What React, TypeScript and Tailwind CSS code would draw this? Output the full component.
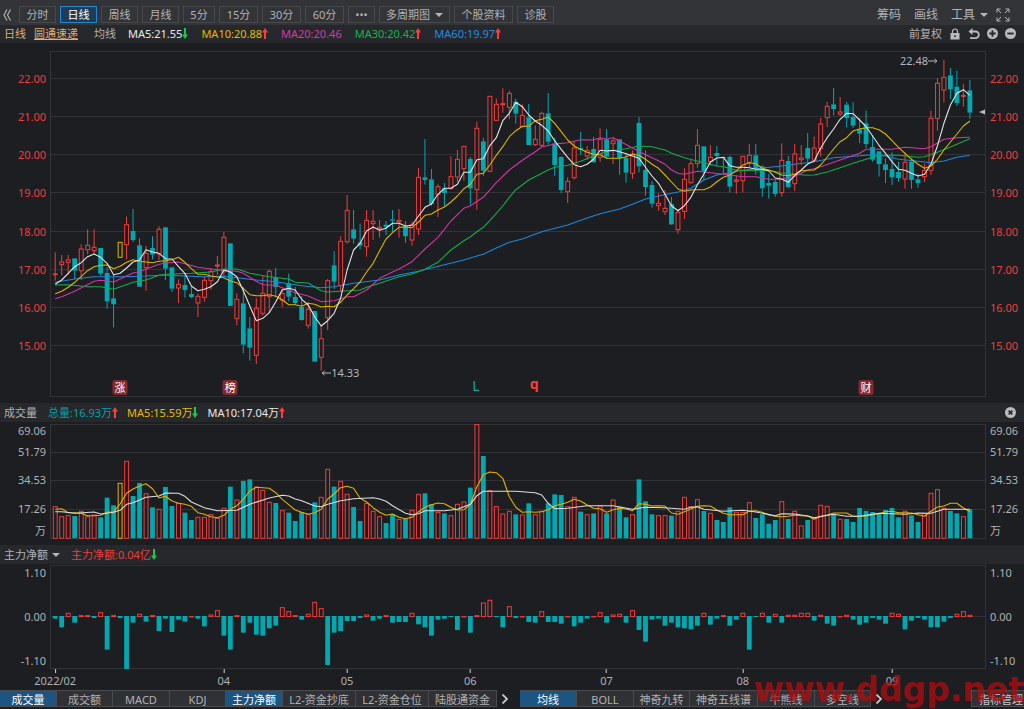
import React from "react";

type Kind = "r" | "g" | "y";
type Candle = [Kind, number, number, number, number];
type Point = [number, number];

const UP = "#f23c3c";
const DOWN = "#00a8b0";
const MARKED = "#e0b800";
const BG = "#1d1e21";
const GRID = "#323337";
const W = 936;
const colorOf = { r: UP, g: DOWN, y: MARKED };

const xAt = (i: number) => 5.2 + i * 6.487;

/* kind, high, body top, body bottom, low; vertical unit is a third of a pixel */
const candles: Candle[] = [
  ["r", 607, 672, 674, 692], ["r", 615, 636, 644, 676], ["r", 615, 630, 637, 675], ["g", 625, 625, 662, 687], ["r", 583, 597, 662, 690],
  ["r", 538, 586, 599, 613], ["r", 538, 592, 602, 613], ["g", 594, 594, 671, 677], ["g", 651, 669, 754, 776], ["g", 672, 745, 763, 832],
  ["y", 577, 577, 622, 622], ["r", 500, 524, 584, 628], ["g", 477, 543, 570, 576], ["g", 565, 586, 710, 710], ["r", 588, 610, 653, 722],
  ["g", 559, 594, 614, 627], ["r", 529, 538, 612, 630], ["g", 532, 532, 656, 690], ["g", 652, 652, 716, 726], ["r", 688, 703, 714, 759],
  ["g", 671, 705, 720, 743], ["g", 710, 732, 741, 745], ["r", 731, 739, 759, 801], ["r", 680, 691, 742, 755], ["r", 655, 664, 692, 719],
  ["r", 618, 645, 648, 675], ["r", 546, 562, 665, 680], ["g", 580, 580, 768, 768], ["r", 730, 748, 806, 826], ["g", 712, 760, 884, 910],
  ["g", 801, 835, 893, 932], ["r", 744, 775, 916, 942], ["r", 677, 730, 790, 797], ["r", 658, 664, 740, 788], ["g", 654, 684, 711, 740],
  ["r", 715, 731, 751, 770], ["g", 671, 700, 740, 754], ["g", 711, 741, 759, 765], ["g", 738, 771, 810, 812], ["r", 755, 778, 826, 836],
  ["g", 783, 783, 935, 935], ["r", 828, 866, 922, 962], ["r", 687, 692, 803, 840], ["g", 604, 646, 695, 717], ["r", 559, 574, 706, 724],
  ["r", 435, 481, 575, 581], ["g", 480, 538, 566, 581], ["g", 521, 577, 587, 598], ["r", 480, 511, 590, 620], ["r", 480, 514, 521, 570],
  ["r", 510, 532, 536, 563], ["g", 513, 524, 531, 555], ["g", 480, 508, 512, 546], ["r", 477, 511, 515, 563], ["g", 513, 529, 559, 578],
  ["r", 515, 524, 570, 587], ["r", 354, 382, 537, 555], ["g", 267, 382, 390, 404], ["g", 357, 388, 462, 467], ["r", 403, 410, 433, 501],
  ["g", 399, 414, 429, 469], ["r", 319, 380, 416, 418], ["r", 300, 328, 381, 395], ["r", 289, 289, 356, 392], ["g", 321, 327, 415, 464],
  ["r", 215, 235, 419, 479], ["g", 263, 274, 362, 378], ["r", 139, 139, 364, 364], ["r", 146, 163, 211, 211], ["r", 115, 161, 164, 188],
  ["r", 122, 130, 172, 208], ["g", 146, 155, 191, 221], ["r", 163, 196, 229, 233], ["g", 162, 202, 285, 285], ["r", 226, 268, 284, 288],
  ["r", 185, 190, 286, 290], ["g", 129, 190, 275, 284], ["g", 263, 280, 345, 377], ["g", 319, 321, 420, 429], ["r", 382, 394, 425, 459],
  ["r", 275, 294, 383, 389], ["g", 246, 294, 300, 314], ["r", 288, 302, 318, 330], ["g", 260, 297, 337, 339], ["r", 235, 268, 322, 335],
  ["g", 237, 268, 320, 327], ["r", 266, 273, 281, 342], ["g", 268, 268, 325, 374], ["g", 308, 324, 368, 398], ["r", 301, 312, 370, 386],
  ["g", 201, 219, 349, 367], ["g", 301, 360, 411, 437], ["g", 393, 405, 461, 473], ["r", 430, 460, 467, 482], ["r", 420, 475, 485, 495],
  ["g", 441, 462, 523, 525], ["r", 477, 487, 539, 551], ["r", 355, 388, 484, 507], ["r", 327, 341, 398, 401], ["r", 237, 286, 340, 353],
  ["g", 289, 289, 363, 391], ["r", 285, 322, 335, 347], ["g", 288, 309, 318, 348], ["g", 320, 321, 325, 370], ["g", 316, 321, 410, 427],
  ["r", 377, 390, 394, 431], ["r", 319, 319, 392, 427], ["r", 282, 316, 337, 352], ["g", 282, 316, 358, 374], ["g", 345, 349, 415, 440],
  ["g", 372, 399, 407, 446], ["g", 390, 396, 432, 440], ["r", 280, 331, 428, 440], ["g", 318, 333, 411, 415], ["r", 282, 312, 401, 423],
  ["r", 285, 324, 329, 345], ["g", 249, 294, 326, 337], ["r", 260, 294, 331, 334], ["r", 204, 222, 296, 320], ["r", 156, 169, 203, 231],
  ["g", 114, 163, 177, 196], ["r", 141, 186, 192, 198], ["g", 156, 164, 204, 232], ["g", 156, 201, 227, 234], ["g", 204, 238, 251, 279],
  ["g", 182, 220, 282, 294], ["g", 256, 291, 329, 335], ["g", 303, 304, 342, 380], ["g", 325, 343, 360, 399], ["g", 307, 357, 382, 405],
  ["g", 335, 366, 384, 395], ["r", 307, 337, 387, 416], ["g", 325, 335, 390, 416], ["g", 371, 388, 399, 413], ["r", 341, 361, 380, 396],
  ["r", 182, 205, 361, 375], ["r", 85, 100, 205, 242], ["r", 30, 82, 120, 157], ["g", 54, 76, 118, 147], ["g", 62, 110, 159, 167],
  ["r", 102, 136, 139, 170], ["g", 90, 121, 188, 207],
];

const series = (ys: number[]): Point[] => ys.map((y, i) => [i, y]);

const ma5 = series([
  703, 690, 670, 650, 638, 620, 612, 622, 640, 674, 670, 654, 636, 630, 599, 606, 610, 626, 627, 650, 670, 708, 722, 718, 710, 695, 660, 666, 680, 722,
  768, 812, 805, 788, 755, 720, 715, 720, 748, 765, 800, 828, 812, 790, 745, 660, 600, 580, 543, 531, 541, 535, 520, 520, 528, 526, 498, 472, 462, 433,
  415, 415, 403, 367, 367, 329, 326, 287, 263, 212, 190, 157, 170, 195, 213, 226, 243, 272, 298, 322, 344, 350, 343, 328, 301, 303, 301, 305, 311, 318,
  325, 352, 378, 400, 433, 467, 482, 467, 442, 404, 372, 336, 324, 322, 347, 352, 352, 353, 358, 358, 363, 384, 387, 397, 377, 360, 342, 333, 294, 263,
  237, 208, 190, 191, 210, 230, 258, 286, 310, 335, 358, 361, 370, 378, 373, 343, 288, 220, 165, 130, 119, 136,
]);

const ma10 = series([
  731, 724, 712, 697, 680, 662, 650, 646, 645, 656, 649, 637, 629, 634, 636, 638, 634, 632, 629, 622, 637, 656, 673, 673, 678, 681, 683, 693, 698, 715,
  734, 737, 737, 734, 739, 749, 764, 764, 769, 760, 763, 771, 769, 770, 757, 735, 716, 696, 666, 640, 602, 567, 548, 532, 531, 533, 516, 496, 492, 480,
  471, 456, 438, 416, 403, 373, 370, 345, 316, 290, 260, 242, 229, 229, 212, 208, 201, 220, 245, 270, 288, 298, 307, 313, 314, 325, 325, 325, 320, 313,
  316, 328, 343, 355, 375, 396, 417, 424, 420, 419, 419, 411, 395, 382, 375, 362, 345, 338, 341, 355, 360, 367, 375, 377, 373, 362, 361, 360, 345, 321,
  297, 275, 263, 243, 237, 233, 233, 239, 252, 272, 292, 310, 328, 343, 355, 348, 328, 300, 276, 252, 228, 213,
]);

const ma20: Point[] = [
  [0, 746], [1, 740], [3, 724], [6, 694], [7, 691], [9, 696], [12, 669], [13, 665], [16, 643], [17, 639], [19, 636], [22, 652], [25, 659], [28, 664], [29, 670],
  [31, 694], [32, 704], [34, 706], [37, 728], [39, 738], [41, 755], [43, 752], [45, 740], [46, 740], [48, 720], [50, 685], [52, 666], [53, 657], [55, 635],
  [57, 597], [59, 562], [61, 513], [63, 475], [64, 467], [66, 442], [68, 398], [70, 360], [72, 331], [74, 305], [75, 291], [77, 282], [79, 278], [81, 269],
  [83, 270], [84, 263], [85, 267], [86, 263], [87, 273], [89, 294], [91, 314], [93, 332], [94, 343], [95, 360], [96, 370], [97, 373], [99, 364], [101, 368],
  [104, 375], [106, 380], [108, 380], [110, 388], [112, 388], [114, 379], [116, 360], [117, 356], [118, 350], [120, 337], [122, 323], [124, 310], [125, 298],
  [129, 298], [131, 292], [134, 296], [135, 290], [136, 279], [137, 268], [139, 263], [141, 262],
];

const ma30: Point[] = [
  [0, 705], [2, 704], [5, 710], [7, 710], [9, 718], [12, 697], [14, 690], [16, 676], [17, 673], [21, 670], [24, 666], [26, 657], [28, 657], [30, 670], [33, 680],
  [36, 687], [37, 697], [39, 699], [41, 722], [42, 726], [47, 720], [48, 712], [50, 700], [53, 680], [55, 672], [57, 658], [59, 637], [61, 600], [63, 572],
  [64, 560], [65, 545], [66, 532], [67, 512], [69, 468], [70, 442], [71, 419], [73, 390], [76, 360], [77, 352], [79, 346], [81, 334], [83, 318], [85, 305],
  [88, 296], [90, 288], [92, 290], [94, 300], [95, 310], [97, 323], [100, 338], [102, 348], [103, 350], [105, 361], [108, 362], [110, 361], [112, 369],
  [114, 373], [116, 376], [117, 375], [119, 366], [121, 353], [123, 340], [125, 328], [127, 316], [130, 316], [133, 322], [134, 320], [136, 307], [138, 291], [141, 266],
];

const ma60: Point[] = [
  [0, 697], [3, 687], [6, 680], [10, 680], [14, 678], [17, 675], [20, 678], [23, 680], [26, 679], [28, 683], [31, 690], [34, 695], [38, 707], [41, 713], [43, 710],
  [46, 700], [50, 690], [53, 675], [56, 664], [60, 644], [63, 630], [65, 618], [66, 613], [68, 594], [70, 577], [72, 567], [75, 545], [79, 525], [82, 504],
  [84, 491], [87, 477], [89, 463], [91, 447], [93, 438], [96, 426], [98, 415], [100, 390], [102, 375], [104, 368], [106, 361], [109, 354], [112, 348],
  [114, 343], [117, 335], [120, 323], [123, 319], [126, 314], [128, 318], [130, 328], [133, 334], [135, 338], [137, 333], [139, 322], [141, 316],
];

const volumes = [
  320, 350, 347, 348, 334, 350, 345, 352, 293, 316, 250, 184, 288, 249, 281, 322, 328, 261, 318, 310, 338, 360, 352, 352, 344, 355, 325, 260, 300, 243,
  238, 261, 271, 307, 309, 332, 338, 363, 336, 343, 307, 292, 208, 260, 244, 283, 321, 363, 310, 334, 350, 369, 342, 358, 356, 331, 283, 280, 313, 337,
  340, 347, 313, 306, 263, 72, 168, 272, 320, 342, 334, 343, 345, 310, 344, 334, 310, 283, 285, 320, 292, 335, 344, 340, 318, 340, 300, 320, 352, 344,
  238, 304, 343, 347, 347, 347, 334, 292, 320, 299, 333, 340, 360, 366, 322, 337, 337, 308, 354, 343, 371, 360, 305, 357, 334, 378, 360, 355, 316, 319,
  343, 358, 357, 366, 324, 333, 336, 340, 330, 324, 352, 334, 346, 366, 341, 280, 269, 325, 333, 340, 350, 328,
];

/* volume bars whose direction differs from the candle above them */
const volumeKind: Record<number, Kind> = {
  34: "g", 29: "g", 30: "g", 32: "r", 33: "r", 36: "g", 37: "g", 38: "g", 60: "g", 74: "r",
  102: "g", 104: "g", 105: "r", 106: "r", 107: "r", 117: "r", 118: "r", 119: "r", 121: "r",
};

const volMa5 = series([
  328, 326, 338, 338, 340, 347, 347, 346, 337, 335, 312, 280, 267, 258, 251, 266, 294, 289, 303, 310, 313, 319, 338, 343, 350, 353, 346, 328, 317, 298,
  273, 262, 263, 265, 278, 298, 314, 330, 337, 343, 338, 328, 297, 282, 263, 259, 265, 295, 306, 323, 337, 346, 342, 352, 356, 352, 335, 322, 314, 309,
  311, 322, 330, 329, 313, 260, 224, 216, 218, 235, 290, 322, 337, 335, 337, 335, 329, 317, 313, 307, 298, 303, 315, 325, 326, 337, 329, 325, 327, 332,
  311, 313, 318, 317, 318, 339, 343, 335, 327, 319, 317, 318, 330, 340, 344, 344, 344, 333, 332, 337, 345, 349, 350, 349, 345, 347, 348, 358, 349, 345,
  339, 339, 339, 349, 349, 348, 344, 341, 335, 334, 338, 338, 339, 344, 349, 334, 321, 318, 310, 310, 324, 335,
]);

const volMa10: Point[] = [
  [0, 335], [1, 335], [3, 340], [6, 336], [7, 342], [9, 337], [10, 331], [11, 313], [12, 308], [14, 292], [16, 288], [17, 279], [19, 280], [20, 289], [21, 306],
  [23, 323], [25, 332], [28, 331], [30, 313], [33, 294], [35, 286], [36, 288], [37, 297], [38, 302], [40, 318], [41, 320], [42, 313], [44, 302], [46, 296],
  [49, 293], [50, 297], [51, 304], [52, 317], [54, 340], [55, 344], [56, 341], [57, 332], [60, 332], [62, 328], [64, 313], [65, 287], [66, 274], [71, 274],
  [74, 278], [75, 285], [76, 310], [77, 326], [79, 325], [82, 317], [86, 317], [89, 328], [91, 322], [94, 323], [97, 328], [98, 322], [99, 320], [100, 328],
  [103, 334], [106, 331], [108, 336], [111, 347], [112, 341], [114, 342], [116, 348], [117, 353], [120, 343], [122, 349], [124, 349], [127, 340], [131, 343],
  [133, 339], [135, 340], [137, 328], [141, 328],
];

/* far end of each bar; zero sits at 214 and inflow lies above it */
const netFlow = [
  221, 247, 204, 233, 211, 211, 219, 202, 314, 211, 219, 372, 233, 207, 230, 211, 258, 221, 261, 224, 230, 214, 221, 244, 209, 196, 272, 314, 211, 263,
  233, 269, 272, 250, 242, 187, 199, 211, 224, 207, 171, 190, 360, 263, 258, 228, 228, 219, 209, 227, 221, 211, 233, 231, 231, 204, 238, 247, 272, 224,
  221, 216, 255, 214, 263, 211, 173, 165, 216, 247, 184, 219, 214, 231, 233, 199, 231, 231, 236, 214, 244, 233, 221, 214, 202, 233, 209, 207, 233, 196,
  255, 290, 224, 221, 242, 233, 247, 250, 253, 242, 204, 239, 221, 211, 242, 224, 204, 314, 216, 204, 233, 207, 233, 210, 210, 204, 204, 227, 210, 236,
  242, 214, 210, 224, 239, 233, 219, 224, 236, 204, 207, 253, 227, 219, 224, 247, 247, 230, 219, 207, 199, 210,
];

function Line({ points, color, base }: { points: Point[]; color: string; base: number }) {
  return (
    <polyline
      points={points.map(([i, y]) => `${xAt(i).toFixed(1)},${((y - base) / 3).toFixed(1)}`).join(" ")}
      fill="none"
      stroke={color}
      strokeWidth="1.1"
      strokeLinejoin="round"
    />
  );
}

function Bar({ i, top, bottom, kind }: { i: number; top: number; bottom: number; kind: Kind }) {
  const c = colorOf[kind];
  const x = xAt(i);
  if (kind === "g") return <rect x={x - 2.4} y={top} width="4.8" height={Math.max(bottom - top, 1)} fill={c} />;
  return <rect x={x - 1.9} y={top} width="3.9" height={Math.max(bottom - top, 0.3)} fill={BG} stroke={c} strokeWidth="1" />;
}

function Plot({ height, lines, label, children }: { height: number; lines: number[]; label: string; children: React.ReactNode }) {
  return (
    <svg role="img" aria-label={label} viewBox={`0 0 ${W} ${height}`} preserveAspectRatio="none" className="block h-full w-full overflow-hidden">
      <g shapeRendering="crispEdges" stroke={GRID} fill="none">
        <rect x="0.5" y="0.5" width={W - 1} height={height - 1} />
        {lines.map((y) => (
          <line key={y} x1="0" x2={W} y1={y + 0.5} y2={y + 0.5} />
        ))}
      </g>
      {children}
    </svg>
  );
}

function PriceChart() {
  return (
    <Plot height={346} lines={[27, 65, 103, 141, 180, 218, 256, 294]} label="日线">
      {candles.map(([k, h, t, b, l], i) => {
        const y = (v: number) => (v - 3) / 3;
        return (
          <g key={i}>
            {t > h && <line x1={xAt(i)} x2={xAt(i)} y1={y(h)} y2={y(t)} stroke={colorOf[k]} strokeWidth="1" />}
            {l > b && <line x1={xAt(i)} x2={xAt(i)} y1={y(b)} y2={y(l)} stroke={colorOf[k]} strokeWidth="1" />}
            <Bar i={i} top={y(t)} bottom={y(b)} kind={k} />
          </g>
        );
      })}
      <Line points={ma60} color="#1c86dc" base={3} />
      <Line points={ma30} color="#14ac48" base={3} />
      <Line points={ma20} color="#d334a4" base={3} />
      <Line points={ma10} color="#dcb400" base={3} />
      <Line points={ma5} color="#e4e4e4" base={3} />
      <path d="M935 58.5V63.5L929 61Z" fill="#b8b8b8" />
    </Plot>
  );
}

function VolumeChart() {
  return (
    <Plot height={115} lines={[28, 56, 85]} label="成交量">
      {volumes.map((v, i) => (
        <Bar key={i} i={i} top={Math.max((v - 72) / 3, 0.5)} bottom={114.3} kind={volumeKind[i] ?? candles[i][0]} />
      ))}
      <Line points={volMa5} color="#dcb400" base={72} />
      <Line points={volMa10} color="#dcdcdc" base={72} />
    </Plot>
  );
}

function FlowChart() {
  return (
    <Plot height={104} lines={[51]} label="主力净额">
      {netFlow.map((v, i) => {
        const y = (v - 60) / 3;
        return v > 214 ? <Bar key={i} i={i} top={51} bottom={y} kind="g" /> : <Bar key={i} i={i} top={y + 0.3} bottom={51.6} kind="r" />;
      })}
    </Plot>
  );
}

function Arrow({ up }: { up?: boolean }) {
  return (
    <svg viewBox="0 0 6 11" className="h-[11px] w-1.5 shrink-0" aria-hidden="true">
      <path d={up ? "M3 0L6 4.5H4V11H2V4.5H0Z" : "M3 11L6 6.5H4V0H2V6.5H0Z"} fill={up ? "#ff3b3b" : "#14cc4c"} />
    </svg>
  );
}

function Caret() {
  return (
    <svg viewBox="0 0 8 4" className="h-1 w-2 shrink-0" aria-hidden="true">
      <path d="M0 0H8L4 4Z" fill="#b4b6b8" />
    </svg>
  );
}

function Reading({ text, tone, dir }: { text: string; tone: string; dir?: "up" | "down" }) {
  return (
    <span className={`flex items-center whitespace-nowrap ${tone}`}>
      {text}
      {dir && <Arrow up={dir === "up"} />}
    </span>
  );
}

const periods = [
  { t: "分时", w: "w-[37px]" },
  { t: "日线", w: "w-[37px]", on: true },
  { t: "周线", w: "w-[37px]" },
  { t: "月线", w: "w-[37px]" },
  { t: "5分", w: "w-[32px]" },
  { t: "15分", w: "w-[39px]" },
  { t: "30分", w: "w-[39px]" },
  { t: "60分", w: "w-[39px]" },
  { t: "•••", w: "w-[27px]" },
  { t: "多周期图", w: "w-[71px]", caret: true },
  { t: "个股资料", w: "w-[59px]" },
  { t: "诊股", w: "w-[37px]" },
];

function Toolbar() {
  return (
    <header className="flex h-[25px] items-center bg-[#333438] pt-1 text-[#b0b2b4]">
      <button type="button" aria-label="返回" className="mr-2 ml-[3px] flex h-[17px] w-2 items-center">
        <svg viewBox="0 0 8 12" className="h-3 w-2" fill="none" stroke="#b4b6b8" strokeWidth="1.1">
          <path d="M4 0.5L1 6L4 11.5M7.5 0.5L4.5 6L7.5 11.5" />
        </svg>
      </button>
      <nav className="flex gap-1">
        {periods.map((p) => (
          <button
            key={p.t}
            type="button"
            className={`flex h-[17px] shrink-0 items-center justify-center gap-[5px] border whitespace-nowrap ${p.w} ${
              p.on ? "border-[#1e88d8] bg-[#1f3c54] text-white" : "border-[#48494d]"
            }`}
          >
            {p.t}
            {p.caret && <Caret />}
          </button>
        ))}
      </nav>
      <div className="mr-[14px] ml-auto flex items-center text-xs leading-none">
        <button type="button" className="mr-[13px]">筹码</button>
        <button type="button" className="mr-[13px]">画线</button>
        <button type="button" className="mr-2 flex items-center gap-[5px]">
          工具
          <Caret />
        </button>
        <button type="button" aria-label="全屏">
          <svg viewBox="0 0 14 14" className="size-3.5" fill="none" stroke="#b4b6b8" strokeWidth="1">
            <path d="M1 4.5V1H4.5M1 1L5 5M9.5 1H13V4.5M13 1L9 5M1 9.5V13H4.5M1 13L5 9M9.5 13H13V9.5M13 13L9 9" />
          </svg>
        </button>
      </div>
    </header>
  );
}

function InfoRow() {
  return (
    <div className="flex h-[18px] items-center bg-[#27282b] pb-px pl-1">
      <span className="text-[#dcae7c]">日线</span>
      <a href="#stock" className="ml-2 text-[#dcae7c] underline underline-offset-1">圆通速递</a>
      <span className="ml-4 text-[#b0b2b4]">均线</span>
      <div className="ml-3 flex gap-[13px]">
        <Reading text="MA5:21.55" tone="text-[#e8e8e8]" dir="down" />
        <Reading text="MA10:20.88" tone="text-[#e4bc00]" dir="up" />
        <Reading text="MA20:20.46" tone="text-[#d838a8]" />
        <Reading text="MA30:20.42" tone="text-[#14b44c]" dir="up" />
        <Reading text="MA60:19.97" tone="text-[#1e8ce4]" dir="up" />
      </div>
      <div className="mr-2 ml-auto flex items-center text-[#b0b2b4]">
        <span className="mr-2">前复权</span>
        <button type="button" aria-label="锁定" className="mr-2">
          <svg viewBox="0 0 10 12" className="h-3 w-2.5">
            <path d="M2.5 6V3.5a2.5 2.5 0 0 1 5 0V6" fill="none" stroke="#b8babc" strokeWidth="1.2" />
            <rect x="0.5" y="5" width="9" height="6.5" fill="#b8babc" />
            <rect x="4.2" y="7.3" width="1.6" height="1.8" fill="#27282b" />
          </svg>
        </button>
        <button type="button" aria-label="撤销" className="mr-[7px]">
          <svg viewBox="0 0 12 12" className="size-3">
            <path d="M3 3.5H7.5a3.3 3.3 0 0 1 0 6.7H2" fill="none" stroke="#b8babc" strokeWidth="1.8" />
            <path d="M4.5 0V7L0.5 3.5Z" fill="#b8babc" />
          </svg>
        </button>
        <button type="button" aria-label="放大" className="mr-[7px]">
          <svg viewBox="0 0 12 12" className="size-[11px]">
            <circle cx="6" cy="6" r="6" fill="#b8babc" />
            <path d="M6 2.5V9.5M2.5 6H9.5" stroke="#27282b" strokeWidth="2" />
          </svg>
        </button>
        <button type="button" aria-label="缩小">
          <svg viewBox="0 0 12 12" className="size-[11px]">
            <circle cx="6" cy="6" r="6" fill="#b8babc" />
            <path d="M2.5 6H9.5" stroke="#27282b" strokeWidth="2" />
          </svg>
        </button>
      </div>
    </div>
  );
}

const prices = ["22.00", "21.00", "20.00", "19.00", "18.00", "17.00", "16.00", "15.00"];

function PriceScale({ side }: { side: string }) {
  return (
    <div className={`flex shrink-0 flex-col justify-between pt-5 pb-[43px] text-[#f03c3c] ${side}`}>
      {prices.map((p) => (
        <span key={p} className="leading-4">{p}</span>
      ))}
    </div>
  );
}

function VolumeScale({ side }: { side: string }) {
  return (
    <div className={`grid shrink-0 grid-rows-[13px_28px_29px_29px_14px] items-center text-[#b0b2b4] ${side}`}>
      {["69.06", "51.79", "34.53", "17.26", "万"].map((v) => (
        <span key={v}>{v}</span>
      ))}
    </div>
  );
}

function FlowScale({ side }: { side: string }) {
  return (
    <div className={`flex shrink-0 flex-col justify-between text-[#b0b2b4] ${side}`}>
      {["1.10", "0.00", "-1.10"].map((v) => (
        <span key={v} className="leading-4">{v}</span>
      ))}
    </div>
  );
}

const LEFT = "w-[50px] pr-1 text-right";
const RIGHT = "w-[38px] pl-1 text-left";

const pct = (i: number) => `${(xAt(i) / W) * 100}%`;

const badges = [
  { i: 10, t: "涨" },
  { i: 27, t: "榜" },
  { i: 125, t: "财" },
];

const months = [
  { i: 0, t: "2022/02" },
  { i: 26, t: "04" },
  { i: 45, t: "05" },
  { i: 64, t: "06" },
  { i: 85, t: "07" },
  { i: 106, t: "08" },
  { i: 129, t: "09" },
];

const leftTabs = [
  { t: "成交量", w: "w-[57px]", on: true },
  { t: "成交额", w: "w-[56px]" },
  { t: "MACD", w: "w-[57px]" },
  { t: "KDJ", w: "w-[56px]" },
  { t: "主力净额", w: "w-[57px]", on: true },
  { t: "L2-资金抄底", w: "w-[73px]" },
  { t: "L2-资金仓位", w: "w-[73px]" },
  { t: "陆股通资金", w: "w-[68px]" },
];

const rightTabs = [
  { t: "均线", w: "w-[57px]", on: true },
  { t: "BOLL", w: "w-[57px]" },
  { t: "神奇九转", w: "w-[56px]" },
  { t: "神奇五线谱", w: "w-[68px]" },
  { t: "牛熊线", w: "w-[57px]" },
  { t: "多空线", w: "w-[56px]" },
];

function Tabs({ items }: { items: { t: string; w: string; on?: boolean }[] }) {
  return (
    <div className="flex shrink-0">
      {items.map((x) => (
        <button
          key={x.t}
          type="button"
          className={`h-[17px] border-y border-r border-[#4a4b4f] pt-px whitespace-nowrap ${x.w} ${x.on ? "bg-[#1c5482] text-white" : "bg-[#303135] text-[#b0b2b4]"}`}
        >
          {x.t}
        </button>
      ))}
    </div>
  );
}

function More() {
  return (
    <button type="button" aria-label="更多指标" className="flex w-[23px] shrink-0 items-center pl-1">
      <svg viewBox="0 0 8 10" className="h-2.5 w-2" fill="none" stroke="#c4c6c8" strokeWidth="1.8">
        <path d="M1.5 0.5L6 5L1.5 9.5" />
      </svg>
    </button>
  );
}

export default function App() {
  return (
    <main className="relative min-h-screen overflow-hidden bg-[#1d1e21] font-['Noto_Sans','Noto_Sans_CJK_SC',sans-serif] text-[11px] leading-none">
      <Toolbar />
      <InfoRow />

      <section className="flex h-[354px] pt-2">
        <PriceScale side={LEFT} />
        <div className="relative min-w-0 flex-1">
          <PriceChart />
          <span className="absolute top-[4px] right-[48px] flex items-center leading-3 text-[#b4b6b8]">
            22.48
            <svg viewBox="0 0 10 6" className="h-1.5 w-2.5" fill="none" stroke="#b4b6b8"><path d="M0 3H9M6.5 1L9 3L6.5 5" /></svg>
          </span>
          <span className="absolute top-[316px] flex items-center leading-3 text-[#b4b6b8]" style={{ left: pct(41) }}>
            <svg viewBox="0 0 10 6" className="h-1.5 w-2.5" fill="none" stroke="#b4b6b8"><path d="M10 3H1M3.5 1L1 3L3.5 5" /></svg>
            14.33
          </span>
          {badges.map((b) => (
            <span
              key={b.t}
              className="absolute bottom-[2px] flex size-[15px] -translate-x-1/2 items-center justify-center rounded-xs bg-[#84282b] text-white"
              style={{ left: pct(b.i) }}
            >
              {b.t}
            </span>
          ))}
          <span className="absolute bottom-[5px] -translate-x-1/2 pr-0.5 text-sm leading-3 text-[#00a8b0]" style={{ left: pct(65) }}>L</span>
          <span className="absolute bottom-[7px] -translate-x-1/2 pr-0.5 text-sm leading-3 font-bold text-[#ff3b3b]" style={{ left: pct(74) }}>q</span>
        </div>
        <PriceScale side={RIGHT} />
      </section>

      <div className="mt-1.5 flex h-[19px] items-center bg-[#27282b] pl-1">
        <h2 className="mr-[11px] text-[#b0b2b4]">成交量</h2>
        <div className="flex gap-[9px]">
          <Reading text="总量:16.93万" tone="text-[#00a0a8]" dir="up" />
          <Reading text="MA5:15.59万" tone="text-[#e4bc00]" dir="down" />
          <Reading text="MA10:17.04万" tone="text-[#e8e8e8]" dir="up" />
        </div>
        <button type="button" aria-label="关闭" className="mr-2 ml-auto">
          <svg viewBox="0 0 12 12" className="size-[11px]">
            <circle cx="6" cy="6" r="6" fill="#b8babc" />
            <path d="M4 4L8 8M8 4L4 8" stroke="#27282b" strokeWidth="1.8" />
          </svg>
        </button>
      </div>
      <section className="flex h-[117px] pt-0.5">
        <VolumeScale side={LEFT} />
        <div className="min-w-0 flex-1">
          <VolumeChart />
        </div>
        <VolumeScale side={RIGHT} />
      </section>

      <div className="mt-1.5 flex h-[19px] items-center bg-[#27282b] pl-1">
        <button type="button" className="mr-[11px] flex items-center gap-1 text-[#b0b2b4]">
          主力净额
          <Caret />
        </button>
        <Reading text="主力净额:0.04亿" tone="text-[#ec3c3c]" dir="down" />
      </div>
      <section className="flex h-[105px] pt-px">
        <FlowScale side={LEFT} />
        <div className="min-w-0 flex-1">
          <FlowChart />
        </div>
        <FlowScale side={RIGHT} />
      </section>

      <div className="relative mr-[38px] ml-[50px] h-[21px] text-[#b0b2b4]">
        {months.map((m) => (
          <span key={m.t} className="absolute top-0 flex -translate-x-1/2 flex-col items-center gap-0.5" style={{ left: pct(m.i) }}>
            <span className="h-1 w-px bg-[#d0d0d0]" />
            {m.t}
          </span>
        ))}
      </div>

      <footer className="flex">
        <Tabs items={leftTabs} />
        <More />
        <Tabs items={rightTabs} />
        <More />
        <button type="button" className="ml-auto h-[17px] w-[53px] overflow-hidden border border-r-0 border-[#4a4b4f] bg-[#303135] pt-px pl-[7px] text-left whitespace-nowrap text-[#c4c6c8]">
          指标管理
        </button>
      </footer>

      <p className="pointer-events-none absolute top-[674px] right-0 font-['DejaVu_Sans',sans-serif] text-[33px] leading-8 font-bold text-[#b00c10]/75">
        www.ddgp.net
      </p>
    </main>
  );
}
